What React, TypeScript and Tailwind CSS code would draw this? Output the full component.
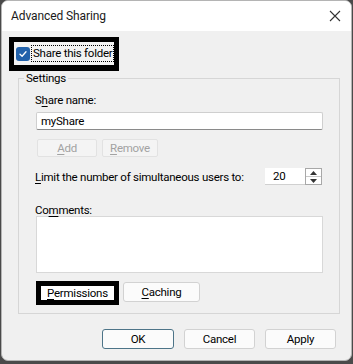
import React from "react";

const F = { fontFamily: 'Roboto, "Liberation Sans", sans-serif' };

function U({ children }: { children: React.ReactNode }) {
  return <span className="underline underline-offset-[2px] decoration-[1px]">{children}</span>;
}

export default function App() {
  return (
    <div className="w-[353px] h-[364px] bg-[#4a4a4a] overflow-hidden whitespace-nowrap" style={F}>
      <div className="w-[351px] h-[361px] ml-px border border-[#b4b4b4] rounded-[7px] overflow-hidden flex flex-col bg-[#f0f0f0] text-[11.5px] tracking-[-0.25px] text-black">
        {/* Title bar */}
        <div className="h-[30px] shrink-0 bg-white flex items-center justify-between pl-[9px] pr-[9px]">
          <span className="text-[12px] tracking-[-0.1px] text-[#1a1a1a] leading-[16px]">Advanced Sharing</span>
          <svg width="12" height="12" viewBox="0 0 12 12" className="mr-[1px]">
            <path d="M1 1 L11 11 M11 1 L1 11" stroke="#333" strokeWidth="1.1" fill="none" />
          </svg>
        </div>
        {/* Body */}
        <div className="flex flex-col pt-[6px]">
          <div className="ml-[7px] w-[110px] h-[34px] border-[5px] border-b-[6px] border-black bg-[#f3f3f3] flex items-center pl-[2px]">
            <div className="w-[14px] h-[14px] rounded-[3px] bg-[#2262ab] flex items-center justify-center shrink-0">
              <svg width="10" height="10" viewBox="0 0 10 10">
                <path d="M2 5.2 L4.1 7.2 L8 2.8" stroke="white" strokeWidth="1.3" fill="none" strokeLinecap="round" strokeLinejoin="round" />
              </svg>
            </div>
            <span className="ml-[1px] border border-dotted border-black leading-[15px] px-px">Share this folder</span>
          </div>

          <fieldset className="ml-[16px] w-[321px] -mt-px border border-[#d6d6d6] px-[16px] pb-[8px]">
            <legend className="-ml-[11px] px-[2px] leading-[16px]">Settings</legend>
            <div className="mt-[6px] leading-[16px]">S<U>h</U>are name:</div>
            <div className="mt-[4px] ml-px w-[287px] h-[18px] bg-white border border-[#cfcfcf] border-b-[#8a8a8a] rounded-[2px] flex items-center pl-[4px] leading-[16px]">myShare</div>
            <div className="mt-[9px] flex">
              <div className="ml-[2px] w-[60px] h-[18px] border border-[#e2e2e2] bg-[#f4f4f4] rounded-[2px] flex items-center justify-center text-[#a2a2a2] leading-[16px]"><U>A</U>dd</div>
              <div className="ml-[5px] w-[56px] h-[18px] border border-[#e2e2e2] bg-[#f4f4f4] rounded-[2px] flex items-center justify-center text-[#a2a2a2] leading-[16px]"><U>R</U>emove</div>
            </div>
            <div className="mt-[11px] flex items-center h-[17px]">
              <span className="leading-[16px]"><U>L</U>imit the number of simultaneous users to:</span>
              <div className="ml-auto mr-px w-[57px] h-[17px] bg-white border-b border-[#d0d0d0] flex">
                <span className="pl-[8px] leading-[16px] flex-1">20</span>
                <div className="w-[17px] h-[17px] border border-[#a8a8a8] flex flex-col">
                  <div className="flex-1 flex items-center justify-center border-b border-[#c8c8c8]">
                    <svg width="7" height="4" viewBox="0 0 7 4"><path d="M0 4 L3.5 0 L7 4 Z" fill="#333" /></svg>
                  </div>
                  <div className="flex-1 flex items-center justify-center">
                    <svg width="7" height="4" viewBox="0 0 7 4"><path d="M0 0 L3.5 4 L7 0 Z" fill="#333" /></svg>
                  </div>
                </div>
              </div>
            </div>
            <div className="mt-[17px] leading-[16px]">Co<U>m</U>ments:</div>
            <div className="-mt-[2px] ml-px w-[287px] h-[57px] bg-white border border-[#d8d8d8]"></div>
            <div className="mt-[8px] flex items-start">
              <div className="ml-px w-[83px] h-[24px] border-[5px] border-black bg-white flex items-center pl-[6px] leading-[14px]"><U>P</U>ermissions</div>
              <div className="ml-[4px] mt-px w-[77px] h-[20px] border border-[#d2d2d2] bg-[#fbfbfb] rounded-[3px] flex items-center justify-center leading-[16px]"><U>C</U>aching</div>
            </div>
          </fieldset>

          <div className="mt-[15px] flex justify-end gap-[10px] pr-[15px]">
            <div className="w-[72px] h-[20px] border border-[#4d7488] bg-[#fbfbfb] rounded-[3px] flex items-center justify-center leading-[16px]">OK</div>
            <div className="w-[71px] h-[20px] border border-[#d2d2d2] bg-[#fbfbfb] rounded-[3px] flex items-center justify-center leading-[16px]">Cancel</div>
            <div className="w-[71px] h-[20px] border border-[#d2d2d2] bg-[#fbfbfb] rounded-[3px] flex items-center justify-center leading-[16px]">Apply</div>
          </div>
        </div>
      </div>
    </div>
  );
}
